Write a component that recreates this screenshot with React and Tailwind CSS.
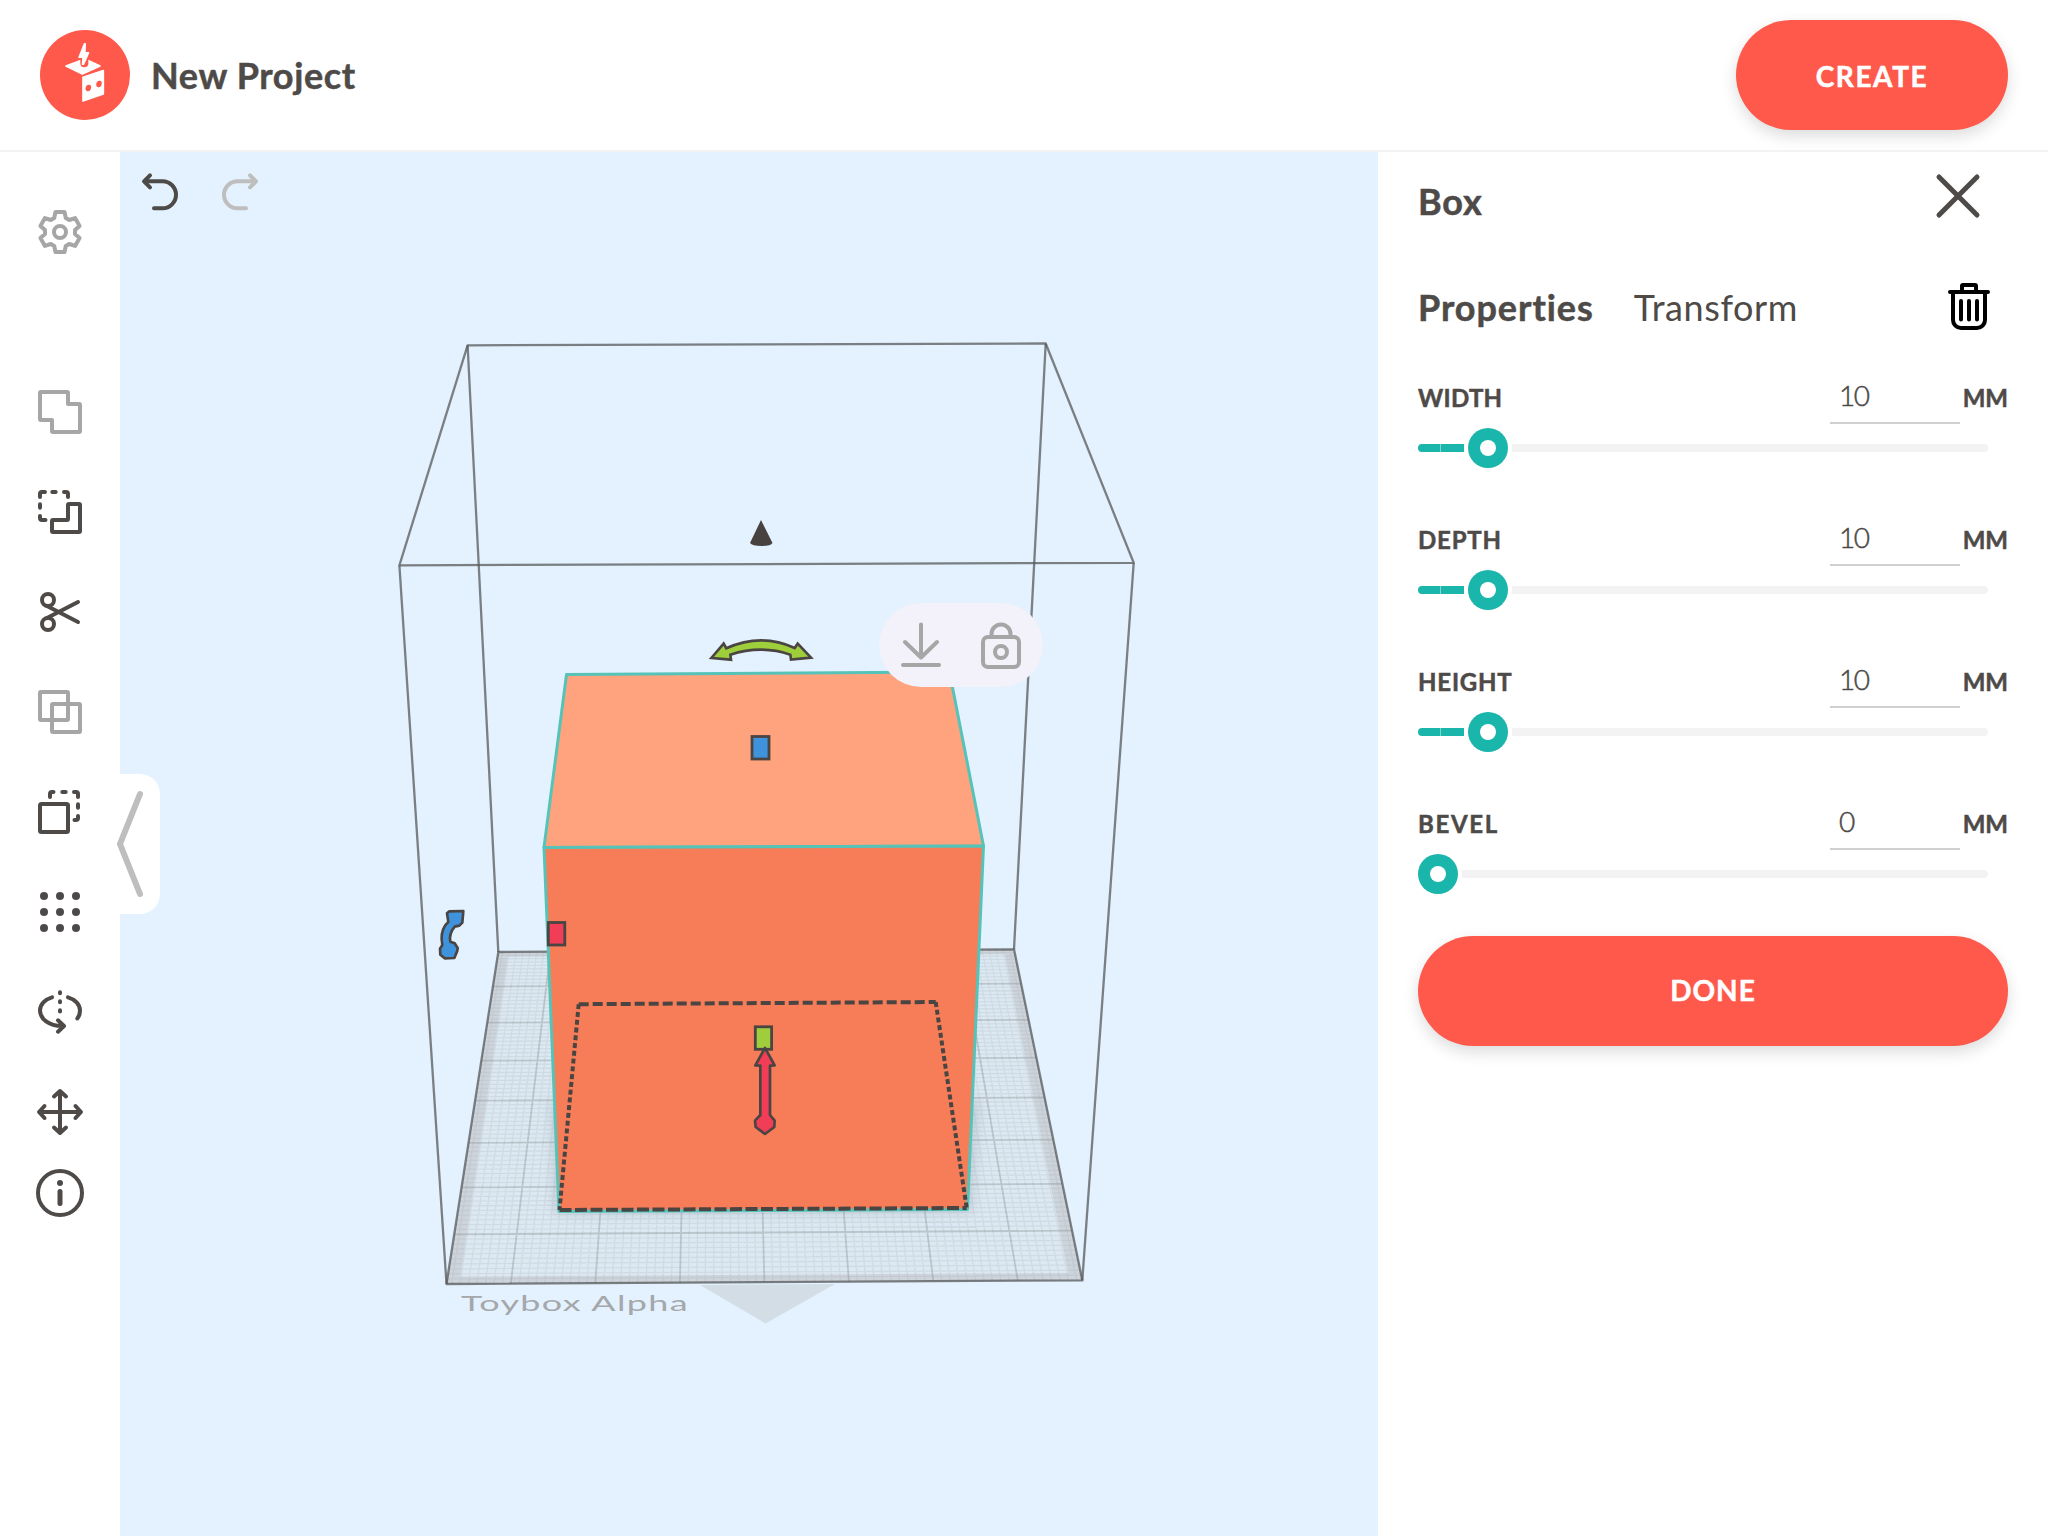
import React from "react";

const INK = "#4e4a48";
const MUTED = "#a6a6a6";

function Icon({ color = INK, className = "", children }) {
  return (
    <svg
      width="48"
      height="48"
      viewBox="0 0 48 48"
      fill="none"
      stroke={color}
      strokeWidth="4"
      strokeLinecap="round"
      strokeLinejoin="round"
      className={`shrink-0 ${className}`}
    >
      {children}
    </svg>
  );
}

/* Six-tooth gear outline around (24, 24) */
const gearPoints = [0, 1, 2, 3, 4, 5]
  .flatMap((i) => {
    const a = (i * Math.PI) / 3;
    return [
      [-5.8, -14],
      [-4.5, -20],
      [4.5, -20],
      [5.8, -14],
    ].map(([x, y]) => {
      const px = 24 + x * Math.cos(a) - y * Math.sin(a);
      const py = 24 + x * Math.sin(a) + y * Math.cos(a);
      return `${px.toFixed(2)},${py.toFixed(2)}`;
    });
  })
  .join(" ");

function Sidebar() {
  return (
    <nav className="flex w-[120px] shrink-0 flex-col items-center gap-[52px] bg-white pt-14">
      <Icon color={MUTED} className="mb-20">
        <polygon points={gearPoints} />
        <circle cx="24" cy="24" r="6" />
      </Icon>
      <Icon color={MUTED}>
        <path d="M5 4H31a1 1 0 0 1 1 1V16H43a1 1 0 0 1 1 1V43a1 1 0 0 1-1 1H17a1 1 0 0 1-1-1V32H5a1 1 0 0 1-1-1V5a1 1 0 0 1 1-1z" />
      </Icon>
      <Icon>
        <path d="M33 16H43a1 1 0 0 1 1 1V43a1 1 0 0 1-1 1H17a1 1 0 0 1-1-1V33a1 1 0 0 1 1-1H31a1 1 0 0 0 1-1V17a1 1 0 0 1 1-1z" />
        <path d="M4 9V6a2 2 0 0 1 2-2H9M16.300 4H19.700M28 4H30a2 2 0 0 1 2 2V9M4 16.300V19.700M4 28V30a2 2 0 0 0 2 2H9.500" />
      </Icon>
      <Icon>
        <circle cx="12" cy="12" r="6" />
        <circle cx="12" cy="36" r="6" />
        <path d="M11 18L42 34M11 30L42 14" />
      </Icon>
      <Icon color={MUTED}>
        <rect x="4" y="4" width="28" height="28" rx="1" />
        <rect x="16" y="16" width="28" height="28" rx="1" />
      </Icon>
      <Icon>
        <rect x="4" y="16" width="28" height="28" rx="1.500" />
        <path d="M14 9V6a2 2 0 0 1 2-2H17.500M26.300 4H29.700M38 4H40a2 2 0 0 1 2 2V9M42 16.300V19.700M42 28V30a2 2 0 0 1-2 2H38.500" />
      </Icon>
      <Icon>
        <g fill={INK} stroke="none">
          {[8, 24, 40].map((y) =>
            [8, 24, 40].map((x) => <circle key={`${x}-${y}`} cx={x} cy={y} r="4" />)
          )}
        </g>
      </Icon>
      <Icon>
        <path d="M16 9.300C9 11.300 4 16.500 4 22.500C4 31 13 38 26 38M22 32.300L28 38L22 43.700M32 9.300C39 11.300 44 16.500 44 22.500C44 25.500 43 28.500 41.300 30.500" />
        <path d="M24 4.300V5.200M24 13.300V14.200M24 22.200V23.400" />
      </Icon>
      <Icon>
        <path d="M24 3.500V44.500M3.500 24H44.500M18 8.500L24 3L30 8.500M18 39.500L24 45L30 39.500M8.500 18L3 24L8.500 30M39.500 18L45 24L39.500 30" />
      </Icon>
      <Icon className="-mt-[19px]">
        <circle cx="24" cy="24" r="22" />
        <circle cx="24" cy="14" r="3" fill={INK} stroke="none" />
        <path d="M24 22.500V34.500" strokeWidth="5" />
      </Icon>
    </nav>
  );
}

/* Perspective mapping of the build plate: u runs left to right, v back to front */
const PLATE = { bl: [498.3, 952], br: [1014, 949.3], fr: [1082.3, 1280.3], fl: [446.5, 1284] };

function makePlane({ bl, br, fr, fl }) {
  const [x0, y0] = bl;
  const [x1, y1] = br;
  const [x2, y2] = fr;
  const [x3, y3] = fl;
  const dx1 = x1 - x2, dx2 = x3 - x2, sx = x0 - x1 + x2 - x3;
  const dy1 = y1 - y2, dy2 = y3 - y2, sy = y0 - y1 + y2 - y3;
  const det = dx1 * dy2 - dx2 * dy1;
  const g = (sx * dy2 - dx2 * sy) / det;
  const h = (dx1 * sy - sx * dy1) / det;
  const a = x1 - x0 + g * x1, b = x3 - x0 + h * x3;
  const d = y1 - y0 + g * y1, e = y3 - y0 + h * y3;
  return (u, v) => {
    const w = g * u + h * v + 1;
    return [(a * u + b * v + x0) / w, (d * u + e * v + y0) / w];
  };
}

const plane = makePlane(PLATE);
const seg = (u1, v1, u2, v2) => {
  const p = plane(u1, v1);
  const q = plane(u2, v2);
  return `M${p[0].toFixed(1)} ${p[1].toFixed(1)}L${q[0].toFixed(1)} ${q[1].toFixed(1)}`;
};
const quad = (u1, v1, u2, v2) =>
  [plane(u1, v1), plane(u2, v1), plane(u2, v2), plane(u1, v2)].map((p) => p.join(",")).join(" ");

const US = 0.1329;
const major = [];
const minor = [];
for (let i = -7; i <= 67; i++) {
  const u = 0.101 + (US * i) / 10;
  if (u > 0.002 && u < 0.998) (i % 10 === 0 && i >= 0 ? major : minor).push(seg(u, 0, u, 1));
}
for (let i = 1; i < 80; i++) {
  const v = i / 80;
  (i % 10 === 0 ? major : minor).push(seg(0, v, 1, v));
}

function Scene() {
  return (
    <svg width="1258" height="1384" viewBox="120 152 1258 1384" className="block" fill="none">
      <defs>
        <filter id="soft" x="-20%" y="-20%" width="140%" height="140%">
          <feGaussianBlur stdDeviation="6" />
        </filter>
      </defs>

      {/* build plate */}
      <polygon points={quad(0, 0, 1, 1)} fill="#ced4db" />
      <polygon points={quad(0.02, 0.018, 0.98, 0.982)} fill="#dde9f2" />
      <path d={minor.join("")} stroke="#8c9ba3" strokeOpacity="0.17" strokeWidth="1.300" />
      <path d={major.join("")} stroke="#8c9599" strokeOpacity="0.42" strokeWidth="1.800" />
      <polygon points="550,1100 980,1100 972,1213 554,1215" fill="#8fa0ab" fillOpacity="0.35" filter="url(#soft)" />
      <polygon points="700,1285 835,1284 765.5,1323.500" fill="#d3dde5" />
      <text
        x="461"
        y="1310.500"
        fontFamily="Lato, sans-serif"
        fontSize="21"
        letterSpacing="0.8"
        fill="#a5a7aa"
        textLength="228"
        lengthAdjust="spacingAndGlyphs"
      >
        Toybox Alpha
      </text>

      {/* build volume */}
      <g stroke="#55585a" strokeOpacity="0.75" strokeWidth="2.300" strokeLinejoin="round">
        <path d="M467.600 345.300L1045.700 343.500L1133.700 562.800L399.400 565.300Z" />
        <path d="M467.600 345.300L498.300 952M1045.700 343.500L1014 949.300M399.400 565.300L446.500 1284M1133.700 562.800L1082.300 1280.300" />
        <path d="M498.300 952L1014 949.300L1082.300 1280.300L446.500 1284Z" />
      </g>

      {/* box */}
      <g stroke="#56c3b8" strokeWidth="3" strokeLinejoin="round">
        <polygon points="566.500,674.500 949.500,672 983.500,846 544,847.500" fill="#ffa37e" />
        <polygon points="544,847.500 983.500,846 967.500,1209.500 559,1211.500" fill="#f77d59" />
      </g>
      <g stroke="#4a4543" strokeWidth="4">
        <path d="M578.700 1004.200L935.700 1002" strokeDasharray="10 4" />
        <path d="M578.700 1004.200L559.500 1210" strokeDasharray="5 2.800" />
        <path d="M935.700 1002L966.700 1208" strokeDasharray="5 2.800" />
        <path d="M559.500 1210L966.700 1208" strokeDasharray="12 3.500" />
      </g>

      {/* handles */}
      <path d="M761 520L772.500 543Q771 546 761.500 546T750 543Z" fill="#474240" />
      <g stroke="#4a4543" strokeWidth="2.800">
        <rect x="752" y="736.500" width="17" height="22.500" fill="#3f92dc" />
        <rect x="548.300" y="922.500" width="16.500" height="22.500" fill="#f23d57" />
        <rect x="755.300" y="1026.800" width="16.300" height="22.500" fill="#a0cd3c" />
      </g>
      <g stroke="#4a4543" strokeWidth="8">
        <path
          transform="translate(680 500) scale(.33333)"
          d="M94 474L131 431L139 445Q243 398 344 444L353 431L393 473L333 479L331 464Q243 434 151 464L153 479Z"
          fill="#9fce3b"
        />
        <g strokeLinejoin="round">
          <path
            transform="translate(420 880) scale(.33333)"
            d="M1035 504L1064 556L1050 557V705L1064 722L1063 741L1035 762L1007 741L1005 722L1021 705V557L1006 556Z"
            fill="#f23d57"
          />
          <path
            transform="translate(420 880) scale(.33333)"
            d="M81 100L88 94L130 93L127 128L118 137L104 140Q86 162 91 185L104 190L113 204L112 212L103 234L74 235L61 224L60 206L67 195Q60 160 75 137L85 126Z"
            fill="#3f92dc"
          />
        </g>
      </g>
    </svg>
  );
}

function CanvasArea() {
  return (
    <main className="relative w-[1258px] shrink-0 bg-[#e3f2fe]">
      <Scene />
      <div className="absolute left-[14px] top-3 flex gap-8">
        <Icon>
          <path d="M11 17.300H28.500a13.500 13.500 0 0 1 0 27H20M16 11.300L10 17.300L16 23.300" />
        </Icon>
        <Icon color="#bebebe">
          <path d="M41 17.300H23.500a13.500 13.500 0 0 0 0 27H32M36 11.300L42 17.300L36 23.300" />
        </Icon>
      </div>
      <div className="absolute left-0 top-[622px] h-[140px] w-10 rounded-r-[20px] bg-white">
        <svg width="40" height="140" viewBox="0 0 40 140" fill="none" className="overflow-visible">
          <path d="M20 20L0 70L20 120" stroke="#bebebe" strokeWidth="6" strokeLinecap="round" />
        </svg>
      </div>
      <div className="absolute left-[759px] top-[451px] flex h-[84px] w-[164px] items-center justify-center gap-8 rounded-full bg-[#f3f1f9]">
        <Icon color={MUTED}>
          <path d="M24 3.500V36M8 21L24 36.500L40 21M6 44H42" />
        </Icon>
        <Icon color={MUTED}>
          <rect x="6" y="16" width="36" height="30" rx="5" />
          <path d="M14.500 16V13a9.500 9.500 0 0 1 19 0V16" />
          <circle cx="24" cy="31" r="6" />
        </Icon>
      </div>
    </main>
  );
}

const BOLD = "font-bold leading-none [-webkit-text-stroke:0.5px_currentColor]";

const BUTTON =
  "flex h-[110px] items-center justify-center rounded-full bg-[#ff594b] text-[28px] font-bold leading-none text-white shadow-[0_6px_16px_rgba(0,0,0,0.14)] [-webkit-text-stroke:0.5px_white]";

function Property({ label, value, thumb, tracking }) {
  return (
    <div className="mb-[42px]">
      <div className="flex h-[52px]">
        <div className={`flex flex-1 items-center text-2xl ${BOLD}`}>
          <span className={tracking}>{label}</span>
        </div>
        <div className="flex w-[130px] items-center border-b-2 border-[#d0d0d0] pb-1 pl-[9px] text-[28px] font-light leading-none tracking-[-1.5px] [-webkit-text-stroke:0.5px_currentColor]">
          {value}
        </div>
        <div className={`flex w-12 items-center justify-end text-2xl ${BOLD}`}>MM</div>
      </div>
      <div className="flex h-12 w-[570px] items-center">
        {thumb > 0 && (
          <div className="flex h-2 items-center" style={{ width: thumb - 4 }}>
            <div className="h-2 w-[22px] rounded-l-full bg-[#1ab5ab]" />
            <div className="h-2 w-px bg-[#7fd5cf]" />
            <div className="h-2 flex-1 bg-[#1ab5ab]" />
          </div>
        )}
        <div
          className={
            thumb > 0
              ? "ml-1 mr-1 flex h-10 w-10 items-center justify-center rounded-full bg-[#1ab5ab]"
              : "mr-1 flex h-10 w-10 items-center justify-center rounded-full bg-[#1ab5ab]"
          }
        >
          <div className="h-4 w-4 rounded-full bg-white" />
        </div>
        <div className="h-2 flex-1 rounded-r-full bg-[#f3f3f3]" />
      </div>
    </div>
  );
}

function Panel() {
  return (
    <aside className="flex w-[670px] flex-col bg-white px-10">
      <div className="flex h-[100px] items-center justify-between">
        <h2 className={`-mt-[3px] text-4xl tracking-[0.8px] ${BOLD}`}>Box</h2>
        <Icon className="-mt-3 mr-[26px]">
          <path d="M5 5L43 43M43 5L5 43" strokeWidth="5" />
        </Icon>
      </div>
      <div className="flex h-[120px] items-center text-4xl leading-none">
        <span className={`-mt-[10px] tracking-[0.95px] ${BOLD}`}>Properties</span>
        <span className="-mt-[10px] ml-10 tracking-[0.6px]">Transform</span>
        <Icon color="#000" className="-mt-[10px] ml-auto mr-[15px]">
          <path d="M5 9H43M17 8V3a1 1 0 0 1 1-1H30a1 1 0 0 1 1 1V8M8 10V37a8 8 0 0 0 8 8H32a8 8 0 0 0 8-8V10M16 18V36.500M24 18V36.500M32 18V36.500" />
        </Icon>
      </div>
      <Property label="WIDTH" value="10" thumb={50} tracking="tracking-[0.3px]" />
      <Property label="DEPTH" value="10" thumb={50} tracking="tracking-[0.8px]" />
      <Property label="HEIGHT" value="10" thumb={50} tracking="tracking-[0.8px]" />
      <Property label="BEVEL" value="0" thumb={0} tracking="tracking-[1.7px]" />
      <button className={`${BUTTON} -mt-1 w-full pb-[3px] tracking-[1px]`}>DONE</button>
    </aside>
  );
}

function Logo() {
  return (
    <svg width="90" height="90" viewBox="0 0 90 90">
      <circle cx="45" cy="45" r="45" fill="#ff594b" />
      <g transform="translate(10 0) scale(.33333)" stroke="#fff" strokeWidth="5" strokeLinejoin="round" fill="#fff">
        <path d="M48 108L90 92L116 92L150 108L97 132Z" />
        <path d="M99 142L160 122V192L99 213Z" />
        <path d="M103 60L96 98V102" stroke="#ff594b" strokeWidth="0" />
        <path d="M103 78V100" stroke="#ff594b" strokeWidth="24" strokeLinecap="round" />
        <path d="M103 41L87 82H99L97 103H101L116 68H105L106 41Z" strokeWidth="4" />
        <g fill="#ff594b" stroke="none">
          <ellipse cx="115" cy="174" rx="8" ry="10" transform="rotate(20 115 174)" />
          <ellipse cx="147" cy="162" rx="8" ry="10" transform="rotate(20 147 162)" />
        </g>
      </g>
    </svg>
  );
}

export default function App() {
  return (
    <div className="flex h-[1536px] w-[2048px] flex-col overflow-hidden bg-white font-['Lato',sans-serif] text-[#4e4a48]">
      <header className="flex h-[152px] shrink-0 items-center border-b-2 border-[#f3f3f3] px-10">
        <Logo />
        <h1 className={`ml-[21px] text-4xl tracking-[0.65px] ${BOLD}`}>New Project</h1>
        <button className={`${BUTTON} ml-auto w-[272px] pt-px tracking-[1.6px]`}>CREATE</button>
      </header>
      <div className="flex flex-1">
        <Sidebar />
        <CanvasArea />
        <Panel />
      </div>
    </div>
  );
}
